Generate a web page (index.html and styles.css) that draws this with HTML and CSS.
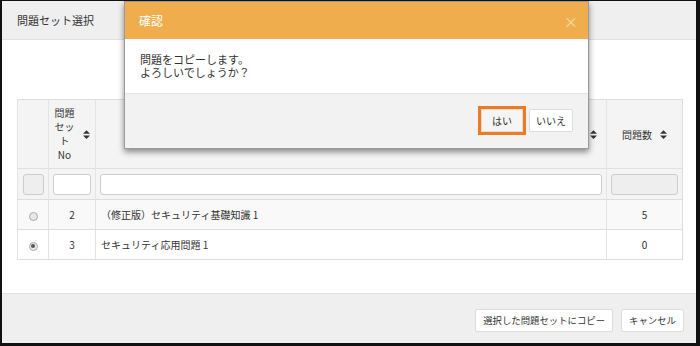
FILE: index.html
```html
<!DOCTYPE html>
<html lang="ja">
<head>
<meta charset="utf-8">
<link rel="stylesheet" href="styles.css">
</head>
<body>
<div class="frame">
  <div class="modal-header">問題セット選択</div>
  <div class="modal-body">
    <table class="grid">
      <colgroup>
        <col class="c1"><col class="c2"><col class="c3"><col class="c4">
      </colgroup>
      <thead>
        <tr class="head">
          <th></th>
          <th><div class="th-in"><span class="wrap">問題<br>セッ<br>ト<br>No</span><svg class="sort" viewBox="0 0 8 10"><path d="M4 0 L8 4 L0 4 Z M4 10 L8 6 L0 6 Z"/></svg></div></th>
          <th class="th-name"><div class="th-in right"><svg class="sort" viewBox="0 0 8 10"><path d="M4 0 L8 4 L0 4 Z M4 10 L8 6 L0 6 Z"/></svg></div></th>
          <th><div class="th-in"><span>問題数</span><svg class="sort" viewBox="0 0 8 10"><path d="M4 0 L8 4 L0 4 Z M4 10 L8 6 L0 6 Z"/></svg></div></th>
        </tr>
        <tr class="filter">
          <td><div class="box disabled small"></div></td>
          <td><div class="box"></div></td>
          <td><div class="box"></div></td>
          <td><div class="box disabled"></div></td>
        </tr>
      </thead>
      <tbody>
        <tr class="odd">
          <td class="center"><span class="radio"></span></td>
          <td class="center">2</td>
          <td>（修正版）セキュリティ基礎知識 1</td>
          <td class="center">5</td>
        </tr>
        <tr>
          <td class="center"><span class="radio checked"></span></td>
          <td class="center">3</td>
          <td>セキュリティ応用問題 1</td>
          <td class="center">0</td>
        </tr>
      </tbody>
    </table>
  </div>
  <div class="modal-footer">
    <button class="btn">選択した問題セットにコピー</button>
    <button class="btn">キャンセル</button>
  </div>

  <div class="confirm">
    <div class="confirm-header"><span>確認</span><span class="close">×</span></div>
    <div class="confirm-body"><p class="line">問題をコピーします。</p><p class="line">よろしいでしょうか？</p></div>
    <div class="confirm-footer">
      <button class="btn yes">はい</button>
      <button class="btn">いいえ</button>
    </div>
  </div>
</div>
</body>
</html>
```
FILE: styles.css
```css
* { box-sizing: border-box; }
html, body { margin: 0; padding: 0; }
body {
  background: #111;
  font-family: "Noto Sans CJK JP", "Noto Sans", sans-serif;
  color: #333;
  width: 700px;
  height: 346px;
  overflow: hidden;
}
.frame {
  position: relative;
  margin: 1px 4px 3px 2px;
  height: 342px;
  background: #fff;
  display: flex;
  flex-direction: column;
}
.modal-header {
  height: 39px;
  background: #efefef;
  border-bottom: 1px solid #e2e2e2;
  padding-left: 15px;
  display: flex;
  align-items: center;
  font-size: 11px;
  color: #333;
}
.modal-body {
  flex: 1;
  padding: 59px 11px 0 15px;
}
.grid {
  width: 666px;
  border-collapse: collapse;
  table-layout: fixed;
  font-size: 10px;
  border: 1px solid #ddd;
}
.c1 { width: 31px; }
.c2 { width: 47px; }
.c4 { width: 76px; }
.grid th, .grid td {
  border-left: 1px solid #e4e4e4;
  padding: 0 5px;
}
.grid tr.head { height: 69px; background: #f4f4f4; }
.grid tr.head th { font-weight: normal; border-bottom: 1px solid #e0e0e0; }
.th-in {
  display: flex;
  align-items: center;
  justify-content: center;
  gap: 8px;
}
.th-in.right { justify-content: flex-end; padding-right: 4px; }
.wrap {
  width: 24px;
  line-height: 14px;
  text-align: center;
}
.sort { width: 7px; height: 9px; fill: #333; flex: none; }
.grid tr.filter { height: 31px; background: #f4f4f4; }
.grid tr.filter td { padding: 0 4px; border-bottom: 1px solid #ddd; }
.box {
  height: 21px;
  border: 1px solid #ccc;
  border-radius: 3px;
  background: #fff;
}
.box.disabled { background: #eee; }
.box.small { width: 21px; margin: 0 auto; }
.grid tbody tr { height: 30px; }
.grid tbody tr.odd { background: #f9f9f9; }
.grid tbody td { border-bottom: 1px solid #ddd; }
.center { text-align: center; }
.radio {
  display: inline-block;
  width: 9px;
  height: 9px;
  border-radius: 50%;
  border: 1px solid #aaa;
  background: #e8e8e8;
  vertical-align: middle;
  position: relative;
}
.radio.checked::after {
  content: "";
  position: absolute;
  left: 1.5px;
  top: 1.5px;
  width: 4px;
  height: 4px;
  border-radius: 50%;
  background: #555;
}
.modal-footer {
  height: 50px;
  background: #efefef;
  border-top: 1px solid #e2e2e2;
  display: flex;
  justify-content: flex-end;
  align-items: flex-start;
  gap: 8px;
  padding: 15px 12px 0 0;
}
.btn {
  font-family: inherit;
  font-size: 9.4px;
  color: #333;
  height: 23px;
  padding: 0 7px;
  background: #fff;
  border: 1px solid #ddd;
  border-radius: 2px;
  line-height: 21px;
}
.confirm {
  position: absolute;
  left: 122px;
  top: 0;
  width: 465px;
  border: 1px solid #9a9a9a;
  box-shadow: 0 3px 6px rgba(0,0,0,0.45);
  background: #fff;
}
.confirm-header {
  height: 37px;
  background: #f0ad4e;
  color: #fff;
  font-size: 12px;
  display: flex;
  align-items: center;
  justify-content: space-between;
  padding: 0 10px 0 14px;
}
.close { color: #f7d9ad; font-size: 14px; }
.confirm-body {
  height: 55px;
  padding: 14px 16px 0 15px;
  font-size: 11px;
  border-bottom: 1px solid #e5e5e5;
}
.line { margin: 0; height: 13px; line-height: 13px; }
.confirm-footer {
  height: 54px;
  background: #f2f2f2;
  display: flex;
  justify-content: flex-end;
  align-items: flex-start;
  gap: 6px;
  padding: 15px 15px 0 0;
}
.confirm-footer .btn { height: 23px; line-height: 21px; padding: 0 6px; font-size: 10px; }
.confirm-footer .btn.yes {
  outline: 3px solid #ef7a22;
  outline-offset: 0;
  padding: 0 10px;
  border-radius: 0;
  background: #f5f5f5;
}
```
